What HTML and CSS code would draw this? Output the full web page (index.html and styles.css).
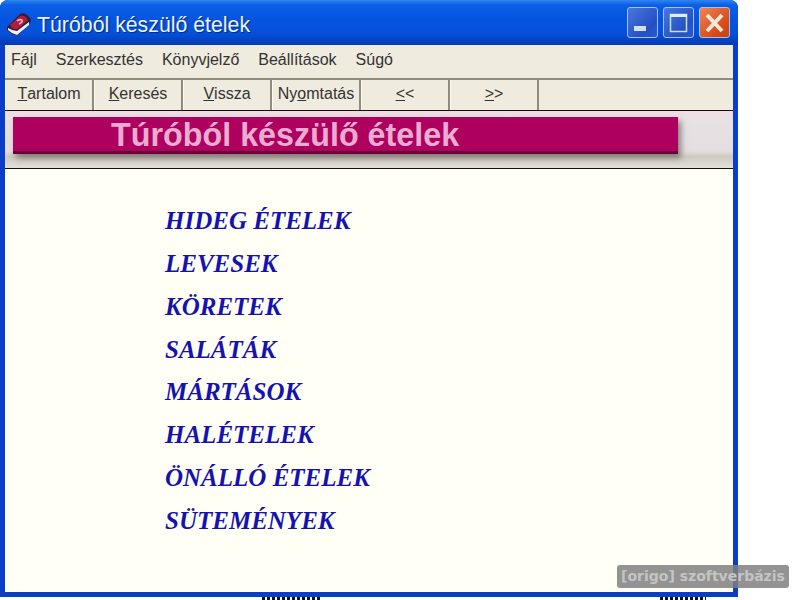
FILE: index.html
```html
<!DOCTYPE html>
<html lang="hu">

<head>
    <meta charset="UTF-8">
    <meta name="viewport" content="width=device-width, initial-scale=1.0">
    <title>Túróból készülő ételek</title>
    <link rel="stylesheet" href="styles.css">
</head>

<body>
    <div class="window">
        <div class="titlebar">
            <svg class="app-icon" width="26" height="26" viewBox="0 0 26 26">
                <path d="M1 16 L14 3 Q18 1 21 4 L25 8 Q25 11 23 13 L12 24 Q9 25 6 23 L1 19 Z" fill="#2c2040" />
                <path d="M4 14 L14 5 Q17 4 20 6 L22 9 L12 18 Q8 19 6 17 Z" fill="#b01c3c" />
                <path d="M2 17 Q7 20 11 20 L23 11 L23 14 L11 24 Q6 23 2 19 Z" fill="#f4f0f4" />
                <path d="M11 10 Q14 8 16 9 Q17 11 13 13" fill="none" stroke="#f0b0bc" stroke-width="1.6" />
            </svg>
            <span class="title-text">Túróból készülő ételek</span>
            <div class="win-buttons">
                <div class="win-btn">
                    <svg width="29" height="29" viewBox="0 0 29 29">
                        <rect x="6" y="18" width="12" height="5" fill="#fff" opacity="0.8" />
                    </svg>
                </div>
                <div class="win-btn">
                    <svg width="29" height="29" viewBox="0 0 29 29">
                        <rect x="6.5" y="6.5" width="16" height="17" fill="none" stroke="#c4defa" stroke-width="1.5" />
                        <rect x="6" y="6" width="17" height="3" fill="#dceeff" />
                    </svg>
                </div>
                <div class="win-btn close">
                    <svg width="29" height="29" viewBox="0 0 29 29">
                        <path d="M7 7 L22 23 M22 7 L7 23" stroke="#f8e6d8" stroke-width="4" />
                    </svg>
                </div>
            </div>
        </div>

        <div class="client">
            <div class="menubar">
                <span>Fájl</span>
                <span>Szerkesztés</span>
                <span>Könyvjelző</span>
                <span>Beállítások</span>
                <span>Súgó</span>
            </div>

            <div class="toolbar">
                <div class="tool-btn"><u>T</u>artalom</div>
                <div class="tool-btn"><u>K</u>eresés</div>
                <div class="tool-btn"><u>V</u>issza</div>
                <div class="tool-btn">Ny<u>o</u>mtatás</div>
                <div class="tool-btn"><u>&lt;</u>&lt;</div>
                <div class="tool-btn"><u>&gt;</u>&gt;</div>
            </div>

            <div class="banner">
                <div class="banner-bar">Túróból készülő ételek</div>
            </div>

            <ul class="topics">
                <li>HIDEG ÉTELEK</li>
                <li>LEVESEK</li>
                <li>KÖRETEK</li>
                <li>SALÁTÁK</li>
                <li>MÁRTÁSOK</li>
                <li>HALÉTELEK</li>
                <li>ÖNÁLLÓ ÉTELEK</li>
                <li>SÜTEMÉNYEK</li>
            </ul>
        </div>
    </div>

    <div class="behind">
        <span class="behind-a"></span>
        <span class="behind-b"></span>
    </div>

    <div class="watermark">[origo] szoftverbázis</div>
</body>

</html>
```

FILE: styles.css
```css
* {
    box-sizing: border-box;
    margin: 0;
    padding: 0;
}

body {
    font-family: 'Liberation Sans', sans-serif;
    background: #fff;
    width: 800px;
    height: 600px;
    overflow: hidden;
    position: relative;
}

.window {
    width: 738px;
    height: 597px;
    background: #0a3ec8;
    border-radius: 8px 8px 0 0;
    display: flex;
    flex-direction: column;
}

.titlebar {
    height: 45px;
    flex: none;
    display: flex;
    align-items: center;
    padding: 3px 8px 0 6px;
    border-radius: 8px 8px 0 0;
    background: linear-gradient(180deg, #2f86ee 0, #0a5fe6 5px, #0554e0 20px, #0450d8 34px, #0439b4 45px);
}

.app-icon {
    flex: none;
}

.title-text {
    margin-left: 5px;
    padding-top: 3px;
    color: #e8f4ff;
    font-size: 21.3px;
    text-shadow: 1px 1px 1px #0a2a80;
}

.win-buttons {
    margin-left: auto;
    display: flex;
    gap: 5px;
    margin-top: -4px;
}

.win-btn {
    width: 31px;
    height: 31px;
    border: 1px solid #9cc4f4;
    border-radius: 3px;
    background: linear-gradient(135deg, #4a78dc, #2450c4 70%, #2a58d0);
}

.win-btn.close {
    background: linear-gradient(135deg, #ec8458, #d84a18 70%, #c84014);
}

.client {
    flex: 1;
    margin: 0 5px 5px 5px;
    background: #fffff5;
    display: flex;
    flex-direction: column;
}

.menubar {
    height: 33px;
    flex: none;
    background: #efebde;
    display: flex;
    align-items: center;
    padding: 0 0 4px 6px;
    gap: 19px;
    font-size: 16px;
    color: #333;
}

.toolbar {
    height: 33px;
    flex: none;
    background: #efebde;
    border-top: 2px solid #8f8c7c;
    border-bottom: 1px solid #111;
    display: flex;
}

.tool-btn {
    width: 89px;
    display: flex;
    align-items: center;
    justify-content: center;
    padding-bottom: 2px;
    font-size: 16px;
    color: #333;
    border-right: 2px solid #8f8c7c;
    border-left: 1px solid #fbfaf4;
    white-space: nowrap;
}

.banner {
    height: 58px;
    flex: none;
    padding: 6px 55px 0 8px;
    background: linear-gradient(180deg, #f8d8e4 0, #e8e2e4 8%, #e4dee0 70%, #cfcac0 80%, #e4e0d8 100%);
    border-bottom: 1px solid #111;
}

.banner-bar {
    height: 37px;
    background: #ae005e;
    border-bottom: 3px solid #6a0038;
    box-shadow: 3px 4px 6px rgba(60, 50, 50, 0.55);
    padding-left: 98px;
    color: #eaacd2;
    font-size: 32.3px;
    font-weight: bold;
    line-height: 36px;
}

.topics {
    list-style: none;
    padding: 30px 0 0 160px;
    font-family: 'Liberation Serif', serif;
    font-size: 25px;
    font-weight: bold;
    font-style: italic;
    color: #1612b0;
}

.topics li {
    height: 42.85px;
    line-height: 43px;
}

.behind {
    height: 3px;
    display: flex;
    padding-left: 262px;
}

.behind-a,
.behind-b {
    display: block;
    height: 3px;
    background: repeating-linear-gradient(90deg, #111 0 3px, #fff 3px 5px);
}

.behind-a {
    width: 60px;
}

.behind-b {
    width: 46px;
    margin-left: 338px;
}

.watermark {
    position: absolute;
    left: 617px;
    top: 565px;
    width: 172px;
    height: 23px;
    background: rgba(128, 128, 128, 0.85);
    border-radius: 3px;
    color: #c4c4c4;
    font-family: 'DejaVu Sans', sans-serif;
    font-size: 14px;
    font-weight: bold;
    line-height: 23px;
    text-align: center;
    white-space: nowrap;
}
```
